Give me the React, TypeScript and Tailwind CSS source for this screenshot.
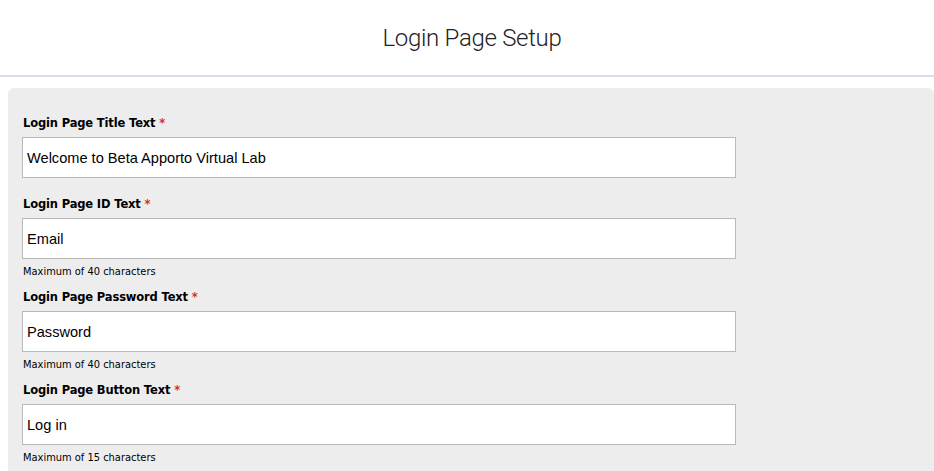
const fields = [
  { label: 'Login Page Title Text', value: 'Welcome to Beta Apporto Virtual Lab', hint: null },
  { label: 'Login Page ID Text', value: 'Email', hint: 'Maximum of 40 characters' },
  { label: 'Login Page Password Text', value: 'Password', hint: 'Maximum of 40 characters' },
  { label: 'Login Page Button Text', value: 'Log in', hint: 'Maximum of 15 characters' },
];

function Field({ label, value, hint }: { label: string; value: string; hint: string | null }) {
  return (
    <div className={hint ? 'mb-[9px]' : 'mb-[17px]'}>
      <label className="block h-4 pl-px pt-px text-[11.5px] font-bold leading-4 tracking-[-0.15px] text-black [font-family:'DejaVu_Sans',sans-serif]">
        {label} <span className="text-[#d0312d]">*</span>
      </label>
      <input
        readOnly
        value={value}
        className="mt-[7px] block h-[41px] w-[714px] border border-[#b9b9b9] bg-white px-[4px] text-[14.6px] text-black outline-none [font-family:'Liberation_Sans',Arial,sans-serif]"
      />
      {hint && (
        <p className="mt-[6px] h-[14px] pl-px text-[9.9px] leading-[14px] text-black [font-family:'DejaVu_Sans',sans-serif]">
          {hint}
        </p>
      )}
    </div>
  );
}

export default function App() {
  return (
    <div className="min-h-screen bg-white">
      <header className="flex h-[77px] items-center justify-center border-b-2 border-[#dcdce8]">
        <h1 className="pl-[10px] pt-px text-[24px] font-light tracking-[-0.3px] text-[#222] [font-family:Roboto,'Liberation_Sans',sans-serif]">
          Login Page Setup
        </h1>
      </header>
      <main className="ml-2 mt-[11px] rounded-t-md bg-[#ededed] pl-[14px] pt-[26px] pb-4">
        {fields.map((f) => (
          <Field key={f.label} {...f} />
        ))}
      </main>
    </div>
  );
}
